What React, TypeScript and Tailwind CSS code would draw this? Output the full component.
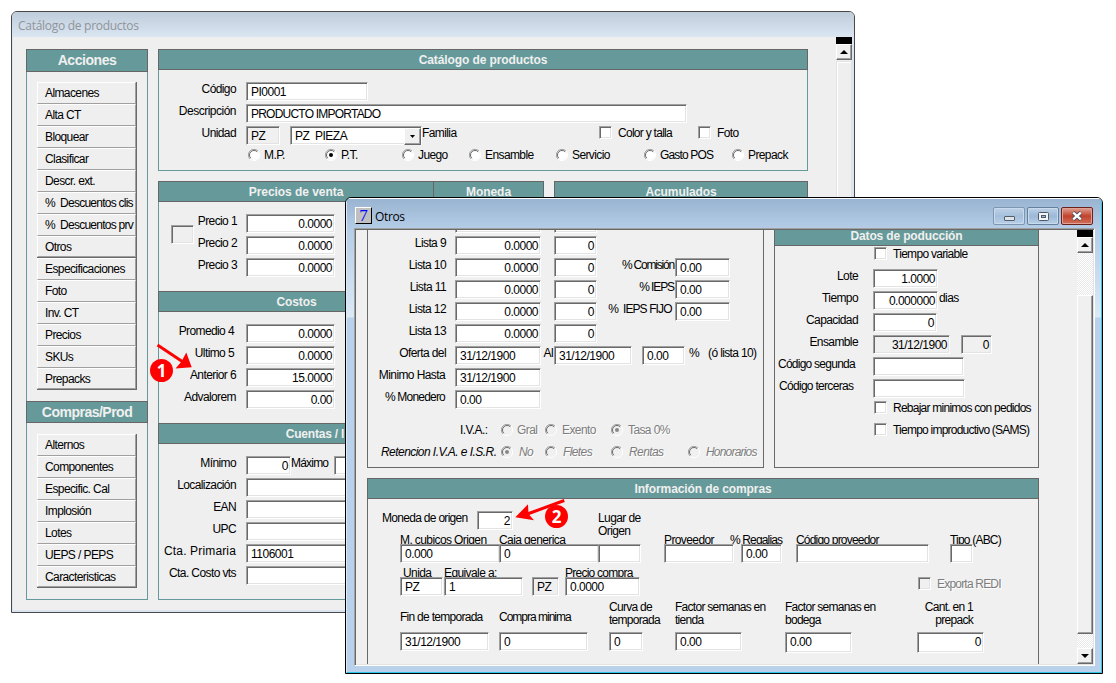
import type { ReactNode } from 'react';
import clsx from 'clsx';

const SUNKEN =
  'border border-t-[#a0a0a0] border-l-[#a0a0a0] border-r-white border-b-white shadow-[inset_1px_1px_0_#696969,inset_-1px_-1px_0_#e3e3e3]';
const RAISED =
  'border border-t-white border-l-white border-r-[#696969] border-b-[#696969] shadow-[inset_-1px_-1px_0_#a0a0a0] bg-[#f0f0f0]';

const ACTIONS = [
  'Almacenes',
  'Alta CT',
  'Bloquear',
  'Clasificar',
  'Descr. ext.',
  '%  Descuentos clis',
  '%  Descuentos prv',
  'Otros',
];
const ACTIONS_MORE = [
  'Especificaciones',
  'Foto',
  'Inv. CT',
  'Precios',
  'SKUs',
  'Prepacks',
];
const PURCHASES = [
  'Alternos',
  'Componentes',
  'Especific. Cal',
  'Implosión',
  'Lotes',
  'UEPS / PEPS',
  'Caracteristicas',
];

interface BoxProps {
  className?: string;
  children?: ReactNode;
}

function Row({ className, children }: BoxProps) {
  return (
    <div className={clsx('flex h-[22px] shrink-0 items-start', className)}>
      {children}
    </div>
  );
}

function Label({ className, children }: BoxProps) {
  return (
    <span
      className={clsx(
        'flex h-[15px] shrink-0 pr-px leading-[15px] whitespace-pre',
        className
      )}
    >
      {children}
    </span>
  );
}

function Field({
  className,
  right,
  disabled,
  tall,
  children,
}: BoxProps & { right?: boolean; disabled?: boolean; tall?: boolean }) {
  return (
    <div
      className={clsx(
        'relative flex shrink-0 items-center pt-px leading-[15px] tracking-[-0.5px]',
        SUNKEN,
        tall ? 'h-[21px] pb-[2px]' : 'h-[19px]',
        right ? 'justify-end pr-[2px]' : 'pl-1',
        disabled ? 'bg-[#f0f0f0]' : 'bg-white',
        className
      )}
    >
      {children}
    </div>
  );
}

function Check({
  className,
  label,
  disabled,
}: {
  className?: string;
  label: string;
  disabled?: boolean;
}) {
  return (
    <div className={clsx('flex shrink-0 items-start gap-[6px]', className)}>
      <span
        className={clsx(
          'h-[13px] w-[13px] shrink-0',
          SUNKEN,
          disabled ? 'bg-[#f0f0f0]' : 'bg-white'
        )}
      />
      <span
        className={clsx(
          'leading-[15px] whitespace-nowrap',
          disabled && 'text-[#7d7d7d] [text-shadow:1px_1px_0_white]'
        )}
      >
        {label}
      </span>
    </div>
  );
}

function Radio({
  className,
  label,
  checked,
  disabled,
  textClass,
}: {
  className?: string;
  label: string;
  checked?: boolean;
  disabled?: boolean;
  textClass?: string;
}) {
  return (
    <div className={clsx('flex shrink-0 items-start', className)}>
      <svg width="12" height="12" viewBox="0 0 12 12" className="mt-px shrink-0">
        <circle cx="6" cy="6" r="5" fill={disabled ? '#f0f0f0' : '#fff'} />
        <path d="M2 10A5.5 5.5 0 0 1 10 2" fill="none" stroke="#a0a0a0" />
        <path d="M2.8 9.2A4.5 4.5 0 0 1 9.2 2.8" fill="none" stroke="#696969" />
        <path d="M2 10A5.5 5.5 0 0 0 10 2" fill="none" stroke="#fff" />
        {checked && (
          <circle cx="6" cy="6" r="2" fill={disabled ? '#888' : '#000'} />
        )}
      </svg>
      <span
        className={clsx(
          'leading-[15px] whitespace-nowrap',
          disabled && 'text-[#7d7d7d] [text-shadow:1px_1px_0_white]',
          textClass ?? 'ml-1'
        )}
      >
        {label}
      </span>
    </div>
  );
}

function Header({ className, children }: BoxProps) {
  return (
    <div
      className={clsx(
        'flex shrink-0 items-center justify-center border border-[#666] bg-[#669999] font-bold whitespace-nowrap text-[#f0f0f0]',
        className ?? 'h-[21px] text-[12px] tracking-[-0.1px]'
      )}
    >
      {children}
    </div>
  );
}

function ButtonGroup({ items }: { items: string[] }) {
  return (
    <div className="ml-[10px] w-[100px] border-r border-b border-[#696969]">
      {items.map((item) => (
        <div
          key={item}
          className={clsx(
            'flex h-[22px] items-center border border-t-white border-r-[#a0a0a0] border-b-[#a0a0a0] border-l-white pl-[7px] whitespace-pre last:h-[21px]',
            item.startsWith('%') && 'tracking-[-0.75px]'
          )}
        >
          {item}
        </div>
      ))}
    </div>
  );
}

// Caption sits on top of its field, which may cut off the descenders
function Stack({
  className,
  label,
  labelClass,
  children,
}: BoxProps & { label?: string; labelClass?: string }) {
  return (
    <div className={clsx('flex shrink-0 flex-col', className)}>
      <span
        className={clsx(
          'h-[11px] leading-[15px] whitespace-nowrap',
          labelClass
        )}
      >
        {label}
      </span>
      {children}
    </div>
  );
}

function ScrollButton({ down }: { down?: boolean }) {
  return (
    <div
      className={clsx(
        'flex h-4 w-4 shrink-0 items-center justify-center',
        RAISED
      )}
    >
      <svg width="8" height="4" viewBox="0 0 8 4">
        <path d={down ? 'M0 0H8L4 4Z' : 'M0 4L4 0L8 4Z'} />
      </svg>
    </div>
  );
}

function Badge({ className, children }: BoxProps) {
  return (
    <span
      className={clsx(
        'absolute flex h-[23px] w-[23px] items-center justify-center rounded-full bg-[#f00] font-["Open_Sans",sans-serif] text-[17px] font-bold tracking-normal text-white',
        className
      )}
    >
      {children}
    </span>
  );
}

function CatalogWindow() {
  return (
    <div className="absolute top-[11px] left-[11px] flex h-[602px] w-[844px] flex-col overflow-hidden rounded-t-[6px] border border-[#484848] bg-[#efefef]">
      <div className='flex h-[25px] shrink-0 items-center bg-gradient-to-b from-[#bfccda] to-[#dae6f2] pt-[3px] pl-[6px] font-["Open_Sans",sans-serif] text-[12px] tracking-[-0.28px] text-[#8f9499]'>
        Catálogo de productos
      </div>
      <div className="flex min-h-0 flex-1 border-r-2 border-b-2 border-l border-[#dae5f1]">
        <div className="mt-3 ml-[13px] flex h-[551px] w-[122px] shrink-0 flex-col">
          <Header className="h-[23px] text-[14px] tracking-[-0.45px]">
            Acciones
          </Header>
          <div className="h-[329px] border-x border-[#669999] pt-[10px]">
            <ButtonGroup items={ACTIONS} />
            <ButtonGroup items={ACTIONS_MORE} />
          </div>
          <Header className="h-[22px] text-[14px] tracking-[-0.5px]">
            Compras/Prod
          </Header>
          <div className="flex-1 border border-t-0 border-[#669999] pt-[11px]">
            <ButtonGroup items={PURCHASES} />
          </div>
        </div>

        <div className="mt-3 ml-[10px] flex h-[551px] w-[650px] shrink-0 flex-col">
          <Header>Catálogo de productos</Header>
          <div className="h-[101px] shrink-0 border border-t-0 border-[#669999] pt-3">
            <Row>
              <Label className="w-[78px] justify-end">Código</Label>
              <Field className="ml-[9px] w-[122px]">PI0001</Field>
            </Row>
            <Row>
              <Label className="w-[78px] justify-end tracking-[-0.5px]">
                Descripción
              </Label>
              <Field className="ml-[9px] w-[441px]">
                <span className="tracking-[-0.78px]">PRODUCTO IMPORTADO</span>
              </Field>
            </Row>
            <Row>
              <Label className="w-[78px] justify-end">Unidad</Label>
              <Field disabled className="ml-[9px] w-[34px]">
                PZ
              </Field>
              <Field className="ml-[10px] w-[132px] whitespace-pre">
                {'PZ  PIEZA'}
                <span
                  className={clsx(
                    'ml-auto flex h-[17px] w-[17px] items-center justify-center',
                    RAISED
                  )}
                >
                  <svg width="5" height="3" viewBox="0 0 5 3">
                    <path d="M0 0H5L2.5 3Z" />
                  </svg>
                </span>
              </Field>
              <Label className="w-[177px]">Familia</Label>
              <Check
                label="Color y talla"
                className="w-[99px] tracking-[-0.72px]"
              />
              <Check label="Foto" />
            </Row>
            <Row className="pl-[89px]">
              <Radio label="M.P." className="w-[77px]" />
              <Radio label="P.T." checked className="w-[77px]" />
              <Radio label="Juego" className="w-[67px]" />
              <Radio label="Ensamble" className="w-[87px]" />
              <Radio label="Servicio" className="w-[88px]" />
              <Radio
                label="Gasto POS"
                className="w-[88px] tracking-[-0.85px]"
              />
              <Radio label="Prepack" />
            </Row>
          </div>

          <div className="mt-[10px] flex min-h-0 flex-1 gap-[10px]">
            <div className="flex w-[386px] flex-col">
              <div className="flex">
                <Header className="h-[21px] w-[276px] text-[12px] tracking-[-0.05px]">
                  Precios de venta
                </Header>
                <Header className="-ml-px h-[21px] w-[111px] text-[12px] tracking-[-0.05px]">
                  Moneda
                </Header>
              </div>
              <div className="flex h-[89px] shrink-0 border-x border-[#669999] pt-3">
                <div
                  className={clsx('mt-[11px] ml-3 h-[19px] w-[23px]', SUNKEN)}
                />
                <div>
                  {['Precio 1', 'Precio 2', 'Precio 3'].map((name) => (
                    <Row key={name}>
                      <Label className="w-[44px] justify-end">{name}</Label>
                      <Field right className="ml-2 w-[89px]">
                        0.0000
                      </Field>
                    </Row>
                  ))}
                </div>
              </div>
              <Header className="h-[21px] pr-[109px] text-[12px] tracking-[-0.1px]">
                Costos
              </Header>
              <div className="h-[111px] shrink-0 border-x border-[#669999] pt-3">
                <Row>
                  <Label className="w-[76px] justify-end">Promedio 4</Label>
                  <Field right className="ml-[11px] w-[89px]">
                    0.0000
                  </Field>
                </Row>
                <Row>
                  <Label className="w-[76px] justify-end">Ultimo 5</Label>
                  <Field right className="ml-[11px] w-[89px]">
                    0.0000
                  </Field>
                </Row>
                <Row>
                  <Label className="w-[78px] justify-end">Anterior 6</Label>
                  <Field right className="ml-[9px] w-[89px]">
                    15.0000
                  </Field>
                </Row>
                <Row>
                  <Label className="w-[78px] justify-end">Advalorem</Label>
                  <Field right className="ml-[9px] w-[89px]">
                    0.00
                  </Field>
                </Row>
              </div>
              <Header className="h-[21px] pr-[72px] text-[12px] tracking-[-0.2px]">
                Cuentas / I
              </Header>
              <div className="flex-1 border border-t-0 border-[#669999] pt-3">
                <Row>
                  <Label className="w-[78px] justify-end">Mínimo</Label>
                  <Field right className="ml-[9px] w-[45px]">
                    0
                  </Field>
                  <Label className="w-[43px] tracking-[-0.8px]">Máximo</Label>
                  <Field className="w-[45px]" />
                </Row>
                {['Localización', 'EAN', 'UPC'].map((name) => (
                  <Row key={name}>
                    <Label className="w-[78px] justify-end">{name}</Label>
                    <Field className="ml-[9px] w-[200px]" />
                  </Row>
                ))}
                <Row>
                  <Label className="w-[78px] justify-end tracking-[0.15px]">
                    Cta. Primaria
                  </Label>
                  <Field className="ml-[9px] w-[200px]">1106001</Field>
                </Row>
                <Row>
                  <Label className="w-[78px] justify-end">Cta. Costo vts</Label>
                  <Field className="ml-[9px] w-[200px]" />
                </Row>
              </div>
            </div>
            <div className="flex w-[254px] flex-col">
              <Header>Acumulados</Header>
              <div className="flex-1 border border-t-0 border-[#669999]" />
            </div>
          </div>
        </div>

        <div className="ml-[28px] flex w-4 flex-col">
          <div className="h-[7px] bg-black" />
          <ScrollButton />
          <div className="mt-px flex-1 border border-[#e3e3e3] shadow-[inset_1px_1px_0_white]" />
        </div>
      </div>
    </div>
  );
}

function OtrosTitleBar() {
  return (
    <div className="flex h-[30px] shrink-0 items-start pt-[8px] pl-[8px]">
      <span className='flex h-[17px] w-[17px] items-center justify-center border border-t-white border-r-black border-b-black border-l-white bg-[#c0c0c0] font-["Liberation_Serif",serif] text-[17px] tracking-normal text-[#00f]'>
        7
      </span>
      <span className='ml-[3px] font-["Open_Sans",sans-serif] text-[12px] leading-[20px] tracking-[-0.35px]'>
        Otros
      </span>
      <div className="mr-2 ml-auto flex gap-[2px]">
        <span className="flex h-[18px] w-8 items-center justify-center rounded-[2px] border border-[#7f96b0] bg-gradient-to-b from-[#bdd2e8] via-[#a5bfdb] to-[#b8d0e9] pt-1 shadow-[inset_0_0_0_1px_#cadbed]">
          <span className="h-[5px] w-[11px] rounded-[1px] border border-[#555d68] bg-[#dde3ea]" />
        </span>
        <span className="flex h-[18px] w-8 items-center justify-center rounded-[2px] border border-[#66809c] bg-gradient-to-b from-[#bdd2e8] via-[#9cb8d6] to-[#b8d0e9] shadow-[inset_0_0_0_1px_#cadbed]">
          <svg width="11" height="9" viewBox="0 0 11 9">
            <rect x=".5" y=".5" width="10" height="8" rx="1" fill="#f1f4f8" stroke="#4f5866" />
            <rect x="3.5" y="3.5" width="4" height="2" fill="#9cb8d6" stroke="#4f5866" />
          </svg>
        </span>
        <span className="flex h-[18px] w-8 items-center justify-center rounded-[2px] border border-[#6b2019] bg-gradient-to-b from-[#dda093] via-[#c2412b] to-[#d2705a] shadow-[inset_0_0_0_1px_#dfa397]">
          <svg width="12" height="10" viewBox="0 0 12 10">
            <path d="M2 1.5L10 8.5M10 1.5L2 8.5" stroke="#4d4f5c" strokeWidth="4.2" />
            <path d="M2.2 1.7L9.8 8.3M9.8 1.7L2.2 8.3" stroke="#fff" strokeWidth="2.4" />
          </svg>
        </span>
      </div>
    </div>
  );
}

function PriceListPanel() {
  return (
    <div className="flex h-[238px] w-[397px] flex-col overflow-hidden border border-t-0 border-[#696969]">
      <Row className="-mt-4 pl-[87px]">
        <Field className="w-[86px]" />
        <Field className="ml-[13px] w-[43px]" />
      </Row>
      {[
        { name: 'Lista 9' },
        { name: 'Lista 10', extra: '% Comisión', extraClass: 'tracking-[-1.2px]' },
        { name: 'Lista 11', extra: '% IEPS', extraClass: 'tracking-[-1.1px]' },
        { name: 'Lista 12', extra: '%  IEPS FIJO ', extraClass: 'tracking-[-0.9px]' },
        { name: 'Lista 13' },
      ].map(({ name, extra, extraClass }) => (
        <Row key={name}>
          <Label className="w-[79px] justify-end">{name}</Label>
          <Field right className="ml-2 w-[86px]">
            0.0000
          </Field>
          <Field right className="ml-[13px] w-[43px]">
            0
          </Field>
          {extra && (
            <>
              <Label className={clsx('w-[78px] justify-end', extraClass)}>
                {extra}
              </Label>
              <Field className="w-[55px]">0.00</Field>
            </>
          )}
        </Row>
      ))}
      <Row>
        <Label className="w-[79px] justify-end">Oferta del</Label>
        <Field className="ml-2 w-[86px]">31/12/1900</Field>
        <Label className="w-[13px] justify-end">Al</Label>
        <Field className="w-[78px]">31/12/1900</Field>
        <Field className="ml-[10px] w-[43px]">0.00</Field>
        <Label className="ml-1">%</Label>
        <Label className="ml-[8px] tracking-[-0.65px]">(ó lista 10)</Label>
      </Row>
      <Row>
        <Label className="w-[78px] justify-end">Minimo Hasta</Label>
        <Field className="ml-[9px] w-[86px]">31/12/1900</Field>
      </Row>
      <Row>
        <Label className="w-[78px] justify-end tracking-[-0.8px]">
          % Monedero
        </Label>
        <Field className="ml-[9px] w-[86px]">0.00</Field>
      </Row>
      <Row className="mt-[11px]">
        <Label className="ml-[92px] w-[41px]">I.V.A.:</Label>
        <Radio disabled label="Gral" className="w-[44px]" />
        <Radio disabled label="Exento" className="w-[66px]" textClass="ml-[5px]" />
        <Radio disabled checked label="Tasa 0%" textClass="ml-[5px]" />
      </Row>
      <Row className="italic">
        <Label className="w-[133px] pl-[13px] tracking-[-0.55px]">
          Retencion I.V.A. e I.S.R.
        </Label>
        <Radio disabled checked label="No" className="w-[44px]" textClass="ml-[6px]" />
        <Radio disabled label="Fletes" className="w-[66px]" textClass="ml-[6px]" />
        <Radio disabled label="Rentas" className="w-[77px]" textClass="ml-[6px]" />
        <Radio
          disabled
          label="Honorarios"
          textClass="ml-[6px] tracking-[-0.8px]"
        />
      </Row>
    </div>
  );
}

function ProductionPanel() {
  return (
    <div className="flex h-[238px] w-[265px] flex-col">
      <Header className="h-[16px] border-t-0 pb-[3px] text-[12px] tracking-[-0.15px]">
        Datos de poducción
      </Header>
      <div className="flex-1 border border-t-0 border-[#696969] pt-px">
        <Row className="pl-[99px]">
          <Check label="Tiempo variable" className="tracking-[-0.7px]" />
        </Row>
        <Row>
          <Label className="w-[84px] justify-end">Lote</Label>
          <Field right className="ml-[14px] w-[65px]">
            1.0000
          </Field>
        </Row>
        <Row>
          <Label className="w-[84px] justify-end">Tiempo</Label>
          <Field right className="ml-[14px] w-[65px]">
            0.000000
          </Field>
          <Label className="ml-px">dias</Label>
        </Row>
        <Row>
          <Label className="w-[84px] justify-end">Capacidad</Label>
          <Field right className="ml-[14px] w-[64px]">
            0
          </Field>
        </Row>
        <Row>
          <Label className="w-[84px] justify-end">Ensamble</Label>
          <Field right disabled className="ml-[14px] w-[77px]">
            31/12/1900
          </Field>
          <Field right disabled className="ml-[11px] w-[31px]">
            0
          </Field>
        </Row>
        <Row>
          <Label className="w-[98px] pl-[3px] tracking-[-0.75px]">
            Código segunda
          </Label>
          <Field className="w-[91px]" />
        </Row>
        <Row>
          <Label className="w-[98px] pl-1 tracking-[-0.7px]">
            Código terceras
          </Label>
          <Field className="w-[92px]" />
        </Row>
        <Row className="pl-[99px]">
          <Check
            label="Rebajar minimos con pedidos"
            className="tracking-[-0.75px]"
          />
        </Row>
        <Row className="pl-[99px]">
          <Check
            label="Tiempo improductivo (SAMS)"
            className="tracking-[-0.77px]"
          />
        </Row>
      </div>
    </div>
  );
}

function PurchaseInfoPanel() {
  return (
    <div className="mt-[10px] flex w-[672px] flex-1 flex-col">
      <Header>Información de compras</Header>
      <div className="h-[180px] shrink-0 border border-[#696969] border-t-0 pt-3">
        <div className="flex h-[22px] items-start">
          <Label className="w-[109px] pl-[14px] tracking-[-0.7px]">
            Moneda de origen
          </Label>
          <Field right className="w-[36px]">
            2
          </Field>
          <span className="mt-px ml-[85px] leading-[13px]">
            Lugar de
            <br />
            Origen
          </span>
        </div>
        <div className="flex h-[33px] items-start pl-8">
          <Stack label="M. cubicos Origen" className="w-[99px]">
            <Field className="w-[100px]">0.000</Field>
          </Stack>
          <Stack label="Caja generica" className="w-[99px]">
            <Field className="w-[100px]">0</Field>
          </Stack>
          <Stack className="w-[66px]">
            <Field className="w-[43px]" />
          </Stack>
          <Stack label="Proveedor" className="w-[66px]">
            <Field className="w-[70px]" />
          </Stack>
          <Stack
            label="% Regalias"
            labelClass="tracking-[-0.85px]"
            className="w-[66px]"
          >
            <Field className="ml-[11px] w-[41px]">0.00</Field>
          </Stack>
          <Stack
            label="Código proveedor"
            labelClass="tracking-[-0.8px]"
            className="w-[154px]"
          >
            <Field className="w-[133px]" />
          </Stack>
          <Stack label="Tipo (ABC)" labelClass="tracking-[-0.8px]">
            <Field className="w-[23px]" />
          </Stack>
        </div>
        <div className="flex h-[34px] items-start pl-8">
          <Stack label="Unida" labelClass="pl-[3px]" className="w-[44px]">
            <Field className="w-[43px]">PZ</Field>
          </Stack>
          <Stack label="Equivale a:" className="w-[88px]">
            <Field className="w-[79px]">1</Field>
          </Stack>
          <Stack className="w-[33px]">
            <Field disabled className="w-[27px]">
              PZ
            </Field>
          </Stack>
          <Stack
            label="Precio compra"
            labelClass="tracking-[-0.75px]"
            className="w-[353px]"
          >
            <Field className="w-[75px]">0.0000</Field>
          </Stack>
          <Check
            disabled
            label="Exporta REDI"
            className="mt-[11px] tracking-[-0.8px]"
          />
        </div>
        <div className="flex h-[32px] items-center pl-8 leading-[13px] tracking-[-0.72px]">
          <span className="w-[99px] pt-[3px]">Fin de temporada</span>
          <span className="w-[110px] pt-[3px] tracking-[-1px]">
            Compra minima
          </span>
          <span className="-mt-[5px] w-[66px]">
            Curva de
            <br />
            temporada
          </span>
          <span className="-mt-[5px] w-[110px]">
            Factor semanas en
            <br />
            tienda
          </span>
          <span className="-mt-[5px] w-[110px]">
            Factor semanas en
            <br />
            bodega
          </span>
          <span className="-mt-[5px] w-[78px] text-right">
            Cant. en 1<br />
            prepack
          </span>
        </div>
        <div className="flex items-start pl-8">
          <Field className="w-[89px]">31/12/1900</Field>
          <Field className="ml-[10px] w-[89px]">0</Field>
          <Field className="ml-[21px] w-[34px]">0</Field>
          <Field className="ml-[32px] w-[67px]">0.00</Field>
          <Field tall className="ml-[43px] w-[67px]">
            0.00
          </Field>
          <Field tall right className="ml-[65px] w-[67px]">
            0
          </Field>
        </div>
      </div>
    </div>
  );
}

function OtrosWindow() {
  return (
    <div className="absolute top-[197px] left-[345px] h-[477px] w-[758px] overflow-hidden rounded-t-[6px] border border-black bg-[#b9d1ea]">
      <div className="flex h-full flex-col border-t border-r border-b border-l border-t-white border-r-[#2fc6e8] border-b-[#2fc6e8] border-l-[#dfeaf5] bg-[linear-gradient(#99b4d1,#b5cde7_30px,#dce9f6_118px,#b9d1ea_119px)]">
        <OtrosTitleBar />
        <div
          className={clsx(
            '-mt-px ml-[7px] h-[438px] w-[741px] bg-[#f0f0f0] p-px',
            SUNKEN
          )}
        >
          <div className="flex h-full overflow-hidden">
            <div className="flex w-[721px] flex-col overflow-hidden pl-[11px]">
              <div className="flex gap-[10px]">
                <PriceListPanel />
                <ProductionPanel />
              </div>
              <PurchaseInfoPanel />
            </div>
            <div className="flex w-4 flex-col bg-[repeating-conic-gradient(#ffffff_0_25%,#e9e9e9_0_50%)] bg-[length:2px_2px]">
              <div className="h-[7px] shrink-0 bg-black" />
              <ScrollButton />
              <div
                className={clsx('mt-[42px] mb-[14px] min-h-0 flex-1', RAISED)}
              />
              <ScrollButton down />
            </div>
          </div>
        </div>
      </div>
    </div>
  );
}

export default function App() {
  return (
    <div className='relative h-[683px] w-[1116px] overflow-hidden bg-white font-["Liberation_Sans",Arial,sans-serif] text-[12px] tracking-[-0.6px] text-black'>
      <CatalogWindow />
      <OtrosWindow />
      <svg
        className="absolute top-[340px] left-[150px]"
        width="46"
        height="32"
        viewBox="150 340 46 32"
      >
        <path d="M157.5 345L183 362" stroke="#f00" strokeWidth="3" />
        <path d="M191.7 367.2L186.3 352.5L181.5 361.5L175.5 368.5Z" fill="#f00" />
      </svg>
      <Badge className="top-[359px] left-[150px]">1</Badge>
      <svg
        className="absolute top-[496px] left-[512px]"
        width="56"
        height="28"
        viewBox="512 496 56 28"
      >
        <path d="M564.3 500.5L526 514.5" stroke="#f00" strokeWidth="3" />
        <path d="M515.3 517.3L528 504.3L528.5 514L534 520.3Z" fill="#f00" />
      </svg>
      <Badge className="top-[505px] left-[545px]">2</Badge>
    </div>
  );
}
